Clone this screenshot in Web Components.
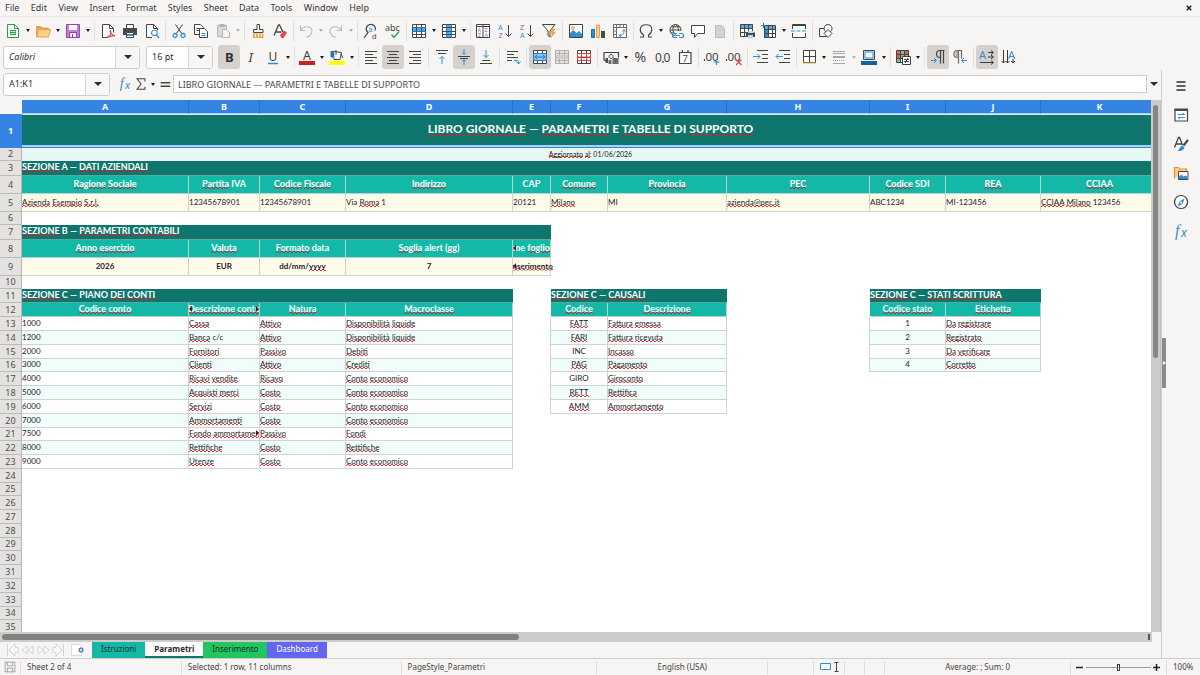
<!DOCTYPE html>
<html lang="en">
<head>
<meta charset="utf-8">
<title>Libro giornale - Calc</title>
<style>
  html, body { margin: 0; height: 100%; }
  body {
    --bg: #f6f5f4; --ink: #3d3d3d; --line: #dedcda; --blue: #3584e4;
    background: var(--bg); color: var(--ink);
    font: 9px/12px "Noto Sans", "Open Sans", sans-serif;
    overflow: hidden;
  }
</style>
</head>
<body>
<calc-app></calc-app>

<script>
const K = '#45443f', B = '#2f8fd3', G = '#b9b7b5';
const s = (d, c = K, w = 1, f = 'none') => `<path d="${d}" stroke="${c}" stroke-width="${w}" fill="${f}"/>`;
const f = (d, c) => `<path d="${d}" fill="${c}"/>`;
const t = (x, y, txt, c = K, size = 9, extra = '') => `<text x="${x}" y="${y}" fill="${c}" font-size="${size}" font-family="Noto Sans, sans-serif" ${extra}>${txt}</text>`;
const l = (x, y, txt, c, size) => `<text x="${x}" y="${y}" fill="${c}" font-size="${size}" font-family="Liberation Sans, sans-serif">${txt}</text>`;
const gridLines = (c) => s('M1.5 1.5h13v13h-13zM1.5 4.5h13M1.5 8.5h13M1.5 11.5h13M5.5 1.5v13M10.5 1.5v13', c);
const ICONS = {
  new: f('M2.5 1.5h7l4 4v9h-11z', '#fff') + s('M2.5 1.5h7l4 4v9h-11zM9.5 1.5v4h4', '#2d9f48') + f('M5 7h6v5H5z', '#2d9f48') + s('M5.5 8.5h5M5.5 10.5h5', '#bfe6c8', 1),
  open: f('M1 3.5h5l1 1.5h7v2h-10L1.5 14z', '#e8a552') + f('M4 6.5h11.5L13.5 14H1.5z', '#fbd08c') + s('M4 6.5h11.5L13.5 14H1.5zM1.5 13.5v-10h4l1 1.5h7v1.5', '#e8a14b'),
  save: f('M1.5 1.5h13v13h-13z', '#c77fd6') + s('M1.5 1.5h13v13h-13z', '#9b45ad') + f('M4 2h8v5H4z', '#fff') + f('M4.5 9.5h7v5h-7z', '#fff') + s('M4.5 9.5h7v5h-7zM7.5 11v3', '#8e3aa0'),
  pdf: f('M2.5 1.5h7l4 4v9h-11z', '#fff') + s('M8 14.5H2.500v-13h7l4 4v4M9.5 1.5v4h4') + s('M7 14.500c4-2 4.500-5 3.500-7-1 0 0 4 4.500 5.500-3-.5-6 .5-8 1.500z', '#e0454c', 1.2),
  print: f('M4 1.5h8v4H4z', '#fff') + s('M4.5 5V1.5h7V5') + f('M1 5h14v7H1z', '#4a4a48') + f('M4 9h8v5.5H4z', '#fff') + s('M4.5 9.5h7v5h-7z') + f('M5 11h6v2H5z', B),
  preview: f('M2.5 1.5h7l4 4v9h-11z', '#fff') + s('M8 14.5H2.5v-13h7l4 4v2M9.5 1.5v4h4') + s('M10.300 7a2.800 2.800 0 1 0 .1 0zM12.500 12l2.5 3', B, 1.2),
  cut: s('M4.5 1.5L11 11M11.5 1.5L5 11') + s('M4 10.5a2 2 0 1 0 .1 0zM12 10.5a2 2 0 1 0 .1 0z', B, 1.3),
  copy: f('M1.5 1.5h6l3 3v7h-9z', '#fff') + s('M1.5 1.5h6l3 3v7h-9zM3.5 5.5h3M3.5 7.5h3') + f('M6.5 5.5h5l3 3v6h-8z', '#fff') + s('M8.5 10.5h4M8.5 12.5h4', B) + s('M6.5 5.5h5l3 3v6h-8z'),
  paste: f('M2 2.5h9.5v12H2z', '#d9d8d6') + s('M2.5 2.5h9v11h-9z', G) + f('M4.5 1h5v3h-5z', '#b3b1af') + f('M7.5 6.5h4l3 3v5h-7z', '#f5f4f2') + s('M7.5 6.5h4l3 3v5h-7z', G),
  brush: s('M7 1.5h2.5v5h3.5v3H3.5v-3H7z') + f('M3 10.5h10.5v4.5H3z', '#f0a64b') + s('M5.5 11v3M8.5 11v3M11.5 11v3', '#fff'),
  clear: s('M2 12.5L6.5 2h1L11 9M3.5 9h6', K, 1.3) + f('M8 12.5l4-5 3 2-3.5 5.5H9.5z', '#e0454c'),
  undo: s('M2.5 2.5v5h5M3 7c3-5 11-4 11 1 0 3-2 5-5.5 6.5', '#bcbab8', 1.1),
  redo: s('M13.5 2.5v5h-5M13 7C10 2 2 3 2 8c0 3 2 5 5.5 6.5', '#bcbab8', 1.1),
  find: s('M7 1.500a4.500 4.500 0 0 0-2 8L1 15M7 1.500c4-.5 6.500 3 5 6', K, 1.2) + l(5.5, 8.5, 'a', B, 7) + l(9, 15.5, 'd', K, 8),
  spell: t(0, 7.5, 'abc', K, 9) + s('M6.5 11.5l2.5 3 5-6', '#2fa35c', 1.4),
  row: f('M1 1h14v14H1z', '#fff') + f('M1 4h14v5H1z', '#5ba9e2') + gridLines(K) + s('M1 4.5h14M1 8.5h14', '#1f78c0'),
  col: f('M1 1h14v14H1z', '#fff') + f('M5 1h6v14H5z', '#5ba9e2') + gridLines(K) + s('M5.5 1v14M10.5 1v14', '#1f78c0'),
  sort: f('M1 1h14v14H1z', '#fff') + s('M1.5 1.5h13v13h-13zM1.5 3.5h13M8 2v13') + l(2.5, 8.5, 'A', B, 5) + l(3, 14, 'Z', '#a748bd', 5) + l(9.5, 8.5, 'Z', '#a748bd', 5) + l(9.5, 14, 'A', B, 5),
  asc: l(1, 7, 'A', B, 7) + l(1.5, 15, 'Z', '#a748bd', 7) + s('M11.5 2v11.5M8.5 10.5l3 3 3-3'),
  desc: l(1, 7, 'Z', '#a748bd', 7) + l(1, 15, 'A', B, 7) + s('M11.5 2v11.5M8.5 10.5l3 3 3-3'),
  filter: s('M1.5 1.5h12.5l-5 6.5v6l-2-1.5V8z') + f('M11 5.5h3.5L12.5 9H15l-5.5 6.5 1.5-5H8.5z', '#f0a64b'),
  image: f('M1.5 1.5h13v13h-13z', '#fff') + f('M2 13.5V10l3.5-3 3 3L11 8l3 3v3.5H2z', B) + s('M1.5 1.5h13v13h-13z') + s('M5 3.5a1.5 1.5 0 1 0 .1 0z', '#f0a64b', 1, '#fbd08c'),
  chart: f('M1.5 6.5h3v8h-3z', '#2f8fd3') + s('M1.5 6.5h3v8h-3z', '#1b6dad') + f('M6.5 2h3v12.5h-3z', '#fbd08c') + s('M6.5 2h3v12.5h-3z', '#e8a14b') + f('M11 8h4v7h-4z', '#4a4a48'),
  pivot: f('M1.5 1.5h13v13h-13z', '#fff') + s('M1.5 1.5h13v13h-13zM1.5 4.5h13M4.5 1.5v13M8 1.5v3M11.5 1.5v3M1.5 8h3M1.5 11.5h3', '#6a6a68') + s('M7 12.5c4 0 5-1.5 5-5.5M10.5 8.5L12 6.5l1.5 2M9 11l-2 1.5L9 14', B),
  omega: s('M2 14h3.5v-2C3 10.5 2.2 9 2.2 6.5 2.2 3.5 4.8 1.8 8 1.8s5.8 1.7 5.8 4.7c0 2.5-.8 4-3.3 5.5v2H14', K, 1.1),
  link: s('M7.5 1.5a5.5 5.5 0 1 0 0 11M7.5 1.5a5.5 5.5 0 0 1 5.5 6M2 7h11M3 3.8h9M3 10h3M7.5 1.5c-3.500 3-3.500 7 0 10M7.5 1.5c2 1.5 3 3 3 6') + s('M9 10.5H6.5a2 2 0 0 0 0 4H9M11 10.5h2.5a2 2 0 0 1 0 4H11M8 12.5h4', B, 1.2),
  comment: f('M1.5 2.5h13v8h-7l-3 4v-4h-3z', '#fff') + s('M1.5 2.5h13v8h-7l-3 4v-4h-3z'),
  headfoot: f('M3 2h6.5l3.5 3.5V15H3z', '#d3d2d0') + s('M3.5 2.5h6l3 3v9h-9z', '#bebcba'),
  printarea: f('M1 1h13v13H1z', '#fff') + f('M1 1h13v4H1z', '#5ba9e2') + s('M1.5 1.5h12v12h-12zM1.5 5.5h12M1.5 9.5h12M5.5 1.5v12M9.5 1.5v12') + f('M7 9.5h9V14H7z', '#4a4a48') + f('M9 8h5v2H9zM9 12h5v3.5H9z', '#b8dcf4'),
  freeze: f('M3 3h12v12H3z', '#fff') + f('M3 3h4v12H3z', '#2f8fd3') + f('M3 3h12v3H3z', '#5ba9e2') + s('M3.5 2.5h11v12h-11zM3.5 6.5h11M3.5 10.5h11M7.5 2.5v12M11.5 2.5v12') + s('M2.5 0v5M0 2.5h5', '#1f78c0'),
  split: f('M1.5 1.5h13v13h-13z', '#fff') + s('M1.5 6V1.5h13V6M1.5 10v4.5h13V10M1.5 2.5h13') + s('M0 8h16', B).replace('/>', ' stroke-dasharray="4 1.5"/>'),
  shapes: s('M1.5 5.5h7v8h-7z') + s('M10 1.5a4 4 0 1 0 .1 0z', K, 1, '#f6f5f4') + s('M10 6.5l4 4-4 4-4-4z', K, 1, '#f6f5f4'),
  bold: t(4, 12.8, 'B', '#2e2e2e', 13, 'font-weight="700"'),
  italic: `<text x="5.5" y="12.5" fill="#3a3a3a" font-size="13" font-family="Noto Sans" font-style="italic">I</text>`,
  under: t(3.5, 11.5, 'U', K, 12) + s('M3 14.5h10', B, 1.5),
  fcolor: t(4, 10.5, 'A', '#3a3a3a', 12.5) + f('M0 12h16v4H0z', '#c9211e'),
  hcolor: s('M4.5 2.5l8 1-1.5 7H5z', K, 1, '#fff') + s('M7 1v5M12 5l2 4', K) + f('M1.5 2h3v6c-1 1-2 1-3 0z', '#1f78c0') + f('M0 12h16v4H0z', '#ffff00'),
  left: s('M2 2.5h12M2 5.5h8M2 8.5h12M2 11.5h8M2 14.5h12'),
  center: s('M2 2.5h12M4 5.5h8M2 8.5h12M4 11.5h8M2 14.5h12'),
  right: s('M2 2.5h12M6 5.5h8M2 8.5h12M6 11.5h8M2 14.5h12'),
  top: s('M2 1.5h12M4 4.5h8') + s('M8 15V7.5M5.5 10L8 7.5l2.5 2.5', B),
  middle: s('M2 7.5h12M4 9.5h8') + s('M8 0v5M6 3.5l2 2 2-2M8 16v-5M6 12.5l2-2 2 2', B),
  bottom: s('M4 11.5h8M2 14.5h12') + s('M8 1v7.5M5.5 6L8 8.5 10.5 6', B),
  wrap: s('M2 2.5h11M2 5.5h7M2 8.5h11M2 11.5h5') + s('M9 11.5h3.500c1 0 1 1 1 3.5M11 12.5l2.5 2.5 2-2.5', B),
  merge: f('M1 1h14v14H1z', '#fff') + gridLines(K) + f('M2 5h12v6H2z', '#8cc6ee') + s('M1.5 4.5h13v7h-13zM3 8h10M5 6L3 8l2 2M11 6l2 2-2 2', '#1f78c0'),
  mergec: f('M1 1h14v14H1z', '#e6e5e3') + gridLines('#b1afad') + f('M2 6h12v4H2z', '#cfcdcb'),
  unmerge: f('M1 1h14v14H1z', '#fff') + gridLines(K) + s('M1.5 4.5h13v7h-13zM5.5 4.5v7M10.5 4.5v7M1.5 8h13', '#e0454c'),
  currency: s('M1 11.500v-8h14.500v5M1 11.500h3', K, 1.2) + s('M8 5.5a2 2 0 1 0 .1 0z', K) + f('M9.500 9h6v6h-6zM5.500 11h3v4h-3z', '#6b6b69') + f('M2.500 9h2.500v5H2.500z', '#4a4a48'),
  percent: t(1.5, 13, '%', K, 14),
  decimal: t(0, 13, '0', K, 12) + t(8.5, 13, '0', K, 12) + s('M8 12v2', K, 1.2),
  date: f('M2 3h12v12H2z', '#fff') + s('M2.5 3.5h11.5v11h-11.5zM5.5 1v3M11 1v3', K, 1.2) + t(5.5, 13, '7', K, 9.5),
  adddec: s('M.5 10v2', K, 1.2) + t(1.5, 12, '00', K, 11.5) + s('M12.5 10v6M9.5 13h6', B, 1.2),
  deldec: s('M.5 10v2', K, 1.2) + t(1.5, 12, '00', K, 11.5) + s('M10 10.5l5.5 5.5M15.5 10.5L10 16', '#e0454c', 1.2),
  indent: s('M4 1.5h11M9 5.5h6M9 9.5h6M4 13.5h11') + s('M0 7.5h7M4.5 5L7 7.5 4.5 10', B),
  outdent: s('M4 1.5h11M9 5.5h6M9 9.5h6M4 13.5h11') + s('M8 7.5H1M3.5 5L1 7.5 3.5 10', B),
  border: f('M2 2h12v12H2z', '#fff') + s('M2.5 1.5h12v12h-12zM8.5 1.5v12M2.5 7.5h12') + s('M2 14h13', '#f0a64b'),
  lstyle: s('M2 2.5h12M2 4.5h12', '#aaa8a6', 1) + s('M2 8h12', '#aaa8a6', 2) + s('M2 11.5h12', '#aaa8a6').replace('/>', ' stroke-dasharray="1 1"/>') + s('M2 14.5h12', '#aaa8a6'),
  bcolor: s('M2.5 1.5h11v9h-11z', K, 1, '#dceefb') + s('M4 3h8v6H4z', '#2f8fd3', 1, '#f4f9fd') + f('M0 12h16v4H0z', '#1c5f9f'),
  cond: f('M1 1h12v12H1z', '#fff') + f('M2 2h11v3H2z', '#e0605c') + f('M6 2h4v3H6zM2 9h4v4H2z', '#7cc68b') + f('M5 5h8v4H5z', '#7cc68b') + f('M2 5h4v4H2z', '#e0605c') + s('M1.5 1.5h12v12h-12zM1.5 5.5h12M1.5 9.5h12M5.5 1.5v12M9.5 1.5v12') + f('M7 7h8.5v8.5H7z', '#fff') + s('M7.5 7.5h8v8h-8zM9 10.5h5M9 12.5h5M13 9l-3 5'),
  ltr: s('M14.500 1.5H9M10.500 1.5v13M13.500 1.5v13', K, 1.2) + s('M10 1.5a3.5 3.5 0 0 0 0 7', K, 1.2) + s('M1 11.5h5M4 9l2.5 2.5L4 14', B),
  rtl: f('M7 1.5a3.5 3.5 0 1 0 0 7z', '#aaa') + s('M10 1.5H5.5a3.5 3.5 0 0 0 0 7M6.5 1.5v13M9.5 1.5v8', '#6a6a68', 1.2) + s('M15 11.5h-5M12 9l-2.5 2.5L12 14', B),
  tdh: t(0, 10, 'A', B, 11) + s('M9 3.5h5M9 8h5M1 13.5h13M12 1.5l2.5 2-2.5 2M12 6l2.5 2L12 10M12 11.5l2.5 2-2.5 2', '#3a3a3a'),
  tdv: t(7, 10, 'A', B, 11) + s('M2.5 1v13M6.5 1v13M12 10v4M.5 12l2 2 2-2M4.5 12l2 2 2-2M10 12l2 2 2-2', '#3a3a3a'),
  fx: `<text x="2" y="12.5" fill="${B}" font-size="16" font-family="Liberation Serif" font-style="italic">f</text>` + `<text x="8" y="14" fill="${B}" font-size="12" font-family="Noto Sans" font-style="italic">x</text>`,
  sigma: s('M12.5 5V2H3.5l4.5 6-4.5 6h9v-3', K, 1.2),
  equal: s('M3 6.5h11M3 10.5h11', K, 1.8),
  menu: s('M3.5 4h9M3.5 8h9M3.5 12h9', '#2e2e2e', 1.5),
  props: f('M2 2h13v12H2z', '#fff') + s('M2 2.5h12.5v11.5H2z', K, 1.2) + f('M1.5 1.5h13.5v2.5H1.5z', '#4a4a48') + s('M4.5 7.5h7M9.5 6l2 1.5M5 10.5h7M7 12L5 10.5', B),
  styles: s('M1.5 11.5L5.5 1.5h1l3 7.5M3 8h5.5', K, 1.3) + s('M15 4L10.500 9.500', K, 2) + f('M9.5 9.5l2 2c-1 3-4 4-7 3.5 2-1 2-4.5 5-5.5z', B),
  gallery: s('M1.5 13.5v-11h4l1 1.5h7v2', '#e8903a', 1.2, '#fbd08c') + f('M5.5 6.5h10v8.5h-10z', '#fff') + s('M5.5 6.5h9.5v8H5.5z') + f('M6 14v-2.5l2.5-2 2 2 2-1 2 1V14z', '#2f8fd3'),
  nav: s('M8 1.5a6.5 6.5 0 1 0 .1 0z', K, 1.2, '#fff') + f('M11.5 4.5L9.5 10l-5 2.5L7 7z', '#2f8fd3') + f('M8 7.5a1 1 0 1 0 .1 0z', '#fff'),
  disk: s('M1.5 1.5h13v13h-13zM4.5 1.5v5h7v-5M4.5 14.5v-5h7v5', '#8b8987'),
  close: s('M5 5l6 6M11 5l-6 6', '#1e1e1e', 2),
};
const svg = (name, size = 16) => `<svg viewBox="0 0 16 16" width="${size}" height="${size}" aria-hidden="true">${ICONS[name]}</svg>`;

const RESET = `
  *, ::before, ::after { box-sizing: border-box; }
  button { margin: 0; padding: 0; border: 0; background: none; color: inherit; font: inherit; }
  input { margin: 0; font: inherit; color: inherit; outline: 0; }
  svg { display: block; overflow: visible; }
`;
class Base extends HTMLElement {
  connectedCallback() {
    if (this.shadowRoot) return;
    this.attachShadow({ mode: 'open' }).innerHTML = `<style>${RESET}${this.css()}</style>${this.html()}`;
  }
  css() { return ''; }
  html() { return '<slot></slot>'; }
}

/* Icon button, optionally with a drop-down arrow beside it */
customElements.define('tool-button', class extends Base {
  css() { return `
    :host { display: flex; flex: none; height: 24px; align-items: stretch; }
    .main { width: 22px; display: grid; place-items: center; border-radius: 3px; }
    :host([active]) .main { background: #d5d2ce; }
    :host([narrow]) .main { width: 16px; }
    .more { width: 8px; display: grid; place-items: center; }
    .more::before { content: ""; border: 2px solid transparent; border-top: 3px solid #1e1e1e; border-bottom: 0; }
    :host([disabled]) .more::before { border-top-color: #b5b3b1; }
  `; }
  html() {
    const label = this.getAttribute('label'), off = this.hasAttribute('disabled') ? 'disabled' : '';
    const size = this.hasAttribute('narrow') ? 14 : 16;
    return `<button class="main" aria-label="${label}" ${off}>${svg(this.getAttribute('icon'), size)}</button>` +
      (this.hasAttribute('split') ? `<button class="more" aria-label="${label} options" ${off}></button>` : '');
  }
});

customElements.define('tool-sep', class extends Base {
  css() { return `
    :host { display: flex; flex: none; width: 5px; height: 20px; justify-content: center; }
    :host([thin]) { width: 4px; }
    i { width: 1px; background: #e2e0de; }
  `; }
  html() { return '<i></i>'; }
});

customElements.define('combo-box', class extends Base {
  css() { return `
    :host { display: flex; flex: none; height: 23px; border: 1px solid #cfccc9; border-radius: 3px; background: #fff; overflow: hidden; }
    input { flex: 1; min-width: 0; border: 0; padding: 0 5px; background: none; color: #2e2e2e; }
    :host([italic]) input { font-style: italic; }
    button { width: 24px; background: #f8f7f6; border-left: 1px solid #d9d6d3; display: grid; place-items: center; }
    button::before { content: ""; border: 4px solid transparent; border-top: 4px solid #2e2e2e; border-bottom: 0; }
  `; }
  html() {
    const l = this.getAttribute('label');
    return `<input type="text" aria-label="${l}" value="${this.getAttribute('value')}"><button aria-label="${l} list"></button>`;
  }
});

customElements.define('menu-bar', class extends Base {
  css() { return `
    :host { display: flex; flex: none; height: 17px; padding: 0 3px 0 0; align-items: center; justify-content: space-between; border-bottom: 1px solid #ebe9e7; color: #363636; }
    nav { display: flex; width: 374px; justify-content: space-between; }
    nav button { padding: 0 5px; line-height: 16px; }
    .x { width: 16px; display: grid; place-items: center; }
  `; }
  html() {
    return `<nav>${['File','Edit','View','Insert','Format','Styles','Sheet','Data','Tools','Window','Help']
      .map(m => `<button>${m}</button>`).join('')}</nav><button class="x" aria-label="Close">${svg('close', 12)}</button>`;
  }
});

/* Toolbars are listed as text: "icon" plain, "icon+" split, "icon*" active, "icon!" disabled, "|" separator, ":" thin separator */
const bar = spec => spec.split(' ').map(k => {
  if (k === '|') return '<tool-sep></tool-sep>';
  if (k === ':') return '<tool-sep thin></tool-sep>';
  const n = k.replace(/[^a-z]/g, '');
  return `<tool-button icon="${n}" label="${n}"${k.includes('+') ? ' split' : ''}${k.includes('*') ? ' active' : ''}${k.includes('!') ? ' disabled' : ''}></tool-button>`;
}).join('');

customElements.define('standard-bar', class extends Base {
  css() { return ':host { display: flex; flex: none; height: 27px; padding-left: 2px; align-items: center; }'; }
  html() { return bar('new+ open+ save+ | pdf print preview | cut copy paste+! | brush clear : undo+! redo+! | find spell : row+ col+ : sort asc desc filter | image chart pivot : omega+ link comment headfoot! | printarea freeze+ split | shapes'); }
});

customElements.define('format-bar', class extends Base {
  css() { return `
    :host { display: flex; flex: none; height: 26px; padding-left: 3px; align-items: center; }
    .font { width: 137px; margin-right: 6px; }
    .size { width: 67px; margin-right: 5px; }
  `; }
  html() {
    return `<combo-box class="font" italic label="Font name" value="Calibri"></combo-box><combo-box class="size" label="Font size" value="16 pt"></combo-box>` +
      bar('bold* italic under+ : fcolor+ hcolor+ : left center* right | top middle* bottom | wrap | merge* mergec! unmerge | currency+ percent decimal date | adddec deldec | indent outdent : border+ lstyle+! bcolor+ : cond+ | ltr* rtl | tdh* tdv');
  }
});

customElements.define('formula-bar', class extends Base {
  css() { return `
    :host { display: flex; flex: none; height: 30px; padding: 0 0 2px 3px; align-items: center; }
    .name { width: 107px; margin-right: 7px; }
    .f { flex: 1; min-width: 0; height: 18px; border: 1px solid #cfccc9; background: #fff; padding: 0 4px; color: #4a4a4a; }
    .drop { width: 14px; height: 18px; display: grid; place-items: center; }
    .drop::before { content: ""; border: 4px solid transparent; border-top: 4px solid #2e2e2e; border-bottom: 0; }
  `; }
  html() {
    return `<combo-box class="name" label="Name box" value="A1:K1"></combo-box>
      <tool-button narrow icon="fx" label="Function wizard"></tool-button>
      <tool-button narrow split icon="sigma" label="Sum"></tool-button>
      <tool-button narrow icon="equal" label="Formula"></tool-button>
      <input class="f" aria-label="Formula" value="LIBRO GIORNALE — PARAMETRI E TABELLE DI SUPPORTO">
      <button class="drop" aria-label="Expand formula bar"></button>`;
  }
});

/* Sheet model. A cell is [span, class, text]; words between ~ are flagged by the spell checker. */
const SEC = (n, x) => [n, 'sec', x], H = x => [1, 'hd', x], C = x => [1, 'in', x], E = n => [n, '', ''];
const conti = [
  ['1000','~Cassa~','~Attivo~','~Disponibilità~ ~liquide~'], ['1200','~Banca~ c/c','~Attivo~','~Disponibilità~ ~liquide~'],
  ['2000','~Fornitori~','~Passivo~','~Debiti~'], ['3000','~Clienti~','~Attivo~','~Crediti~'],
  ['4000','~Ricavi~ ~vendite~','~Ricavo~','~Conto~ ~economico~'], ['5000','~Acquisti~ ~merci~','~Costo~','~Conto~ ~economico~'],
  ['6000','~Servizi~','~Costo~','~Conto~ ~economico~'], ['7000','~Ammortamenti~','~Costo~','~Conto~ ~economico~'],
  ['7500','~Fondo~ ~ammortamento~','~Passivo~','~Fondi~'], ['8000','~Rettifiche~','~Costo~','~Rettifiche~'],
  ['9000','~Utenze~','~Costo~','~Conto~ ~economico~']];
const causali = [['~FATT~','~Fattura~ ~emessa~'],['~FARI~','~Fattura~ ~ricevuta~'],['INC','~Incasso~'],['~PAG~','~Pagamento~'],['GIRO','~Giroconto~'],['~RETT~','~Rettifica~'],['~AMM~','~Ammortamento~']];
const stati = [['1','~Da~ ~registrare~'],['2','~Registrato~'],['3','~Da~ ~verificare~'],['4','~Corretto~']];
const ROWS = [
  [34, [[11, 'title', '~LIBRO~ ~GIORNALE~ — ~PARAMETRI~ E ~TABELLE~ DI ~SUPPORTO~']]],
  [13, [[11, 'date', '~Aggiornato~ ~al~: 01/06/2026']]],
  [15, [SEC(11, '~SEZIONE~ A — ~DATI~ ~AZIENDALI~')]],
  [18, ['~Ragione~ ~Sociale~','~Partita~ IVA','~Codice~ ~Fiscale~','~Indirizzo~','CAP','~Comune~','~Provincia~','~PEC~','~Codice~ SDI','~REA~','~CCIAA~'].map(x => x === 'CAP' ? [1, 'hd cap', x] : H(x))],
  [18, ['~Azienda~ ~Esempio~ ~S.r.l.~','12345678901','12345678901','Via ~Roma~ 1','20121','~Milano~','MI','~azienda@pec.it~','ABC1234','MI-123456','~CCIAA~ ~Milano~ 123456'].map(C)],
  [12, [E(11)]],
  [15, [SEC(5, '~SEZIONE~ B — ~PARAMETRI~ ~CONTABILI~'), E(6)]],
  [18, [H('~Anno~ ~esercizio~'), H('~Valuta~'), H('~Formato~ data'), H('~Soglia~ alert (~gg~)'), [1, 'hd cutl end', 'Nome ~foglio~'], E(6)]],
  [18, [...['2026','EUR','dd/mm/~yyyy~','7'].map(x => [1, 'in mid', x]), [1, 'in mid cutl spill', '~Inserimento~'], E(6)]],
  [13, [E(11)]],
  [14, [SEC(4, '~SEZIONE~ C — PIANO ~DEI~ ~CONTI~'), E(1), SEC(2, '~SEZIONE~ C — ~CAUSALI~'), E(1), SEC(2, '~SEZIONE~ C — ~STATI~ ~SCRITTURA~'), E(1)]],
  [14, [H('~Codice~ ~conto~'), [1, 'hd cutl cutr', '~Descrizione~ ~conto~'], H('~Natura~'), H('~Macroclasse~'), E(1), H('~Codice~'), H('~Descrizione~'), E(1), H('~Codice~ ~stato~'), H('~Etichetta~'), E(1)]],
];
const HEIGHTS = [14,14,14,13,14,14,14,14,13,14,14,14,13,14,14,14,13,14,14,14,14,13,14];
HEIGHTS.forEach((h, i) => {
  const z = i % 2 ? 'w alt' : 'w', cells = [];
  const gap = next => [1, next ? 'edge' : '', ''];
  if (conti[i]) {
    conti[i].forEach((x, j) => cells.push([1, z + (i === 8 && j === 1 ? ' cutr' : ''), x]));
    cells.push(gap(causali[i]));
    causali[i] ? cells.push([1, z + ' mid', causali[i][0]], [1, z, causali[i][1]]) : cells.push(E(2));
    cells.push(gap(stati[i]));
    stati[i] ? cells.push([1, z + ' mid', stati[i][0]], [1, z, stati[i][1]]) : cells.push(E(2));
    cells.push(E(1));
  } else cells.push(E(11));
  ROWS.push([h, cells]);
});

customElements.define('sheet-grid', class extends Base {
  css() { return `
    :host { display: flex; flex: 1; min-height: 0; overflow: hidden; background: #fff; }
    .view { flex: 1; min-width: 0; overflow: hidden; }
    table { width: calc(100% + 8px); table-layout: fixed; border-collapse: separate; border-spacing: 0; font: 8px/10px Lato, "Open Sans", sans-serif; color: #1c1c1c; }
    th, td { padding: 0; white-space: nowrap; overflow: hidden; vertical-align: middle; font-weight: 400; }
    th { font: 9px/12px "Noto Sans", sans-serif; }
    thead th { height: 14px; background: var(--blue); color: #fff; font-weight: 700; border-right: 1px solid #2c72c9; border-bottom: 1px solid #a9cdf3; }
    thead th:first-child { background: var(--bg); border-color: var(--bg); }
    tbody th { background: #e4e2e0; color: #4c4c4c; border-right: 1px solid #b9b7b5; border-bottom: 1px solid #bdbbb9; }
    tbody tr:first-child th { background: var(--blue); color: #fff; font-weight: 700; border-color: var(--blue); }
    td { text-align: left; position: relative; padding-bottom: 2px; }
    td .v { display: block; }
    .title { background: #0f766e; color: #fff; font-size: 12px; line-height: 16px; font-weight: 700; text-align: center; border-top: 1px solid #d9f0ee; border-bottom: 1px solid var(--blue); box-shadow: inset 0 -2px #a5d5ee; padding-bottom: 4px; }
    .date { background: #e6f7f4; text-align: center; font-size: 7px; }
    .sec { background: #0f766e; color: #fff; font-size: 9px; font-weight: 700; border-bottom: 1px solid #5aa79f; }
    .hd { background: #14b8a6; color: #fff; font-size: 9px; font-weight: 700; text-align: center; border-right: 1px solid #a9d5d0; border-bottom: 1px solid #b5d6d2; }
    .in { background: #fffbeb; border-right: 1px solid #d5d3cb; border-bottom: 1px solid #d0d0cc; }
    .w { border-right: 1px solid #d0d3d6; border-bottom: 1px solid #d0d3d6; }
    .alt { background: #f0fdfa; }
    .mid { text-align: center; }
    .in.mid { font-weight: 700; }
    .edge { border-right: 1px solid #d0d3d6; }
    .cutl .v { display: flex; justify-content: center; }
    .end .v { justify-content: flex-end; }
    .spill { overflow: visible; }
    .spill .v { clip-path: inset(0 -3px 0 0); }
    .cutl::before, .cutr::after { content: ""; position: absolute; top: 50%; margin-top: -4px; border: 3px solid transparent; }
    .cutl::before { left: 0; border-left: 0; border-right-color: #6b0f14; z-index: 1; }
    .cutr::after { right: 0; border-right: 0; border-left-color: #6b0f14; }
    .sp { background: url("data:image/svg+xml,%3Csvg xmlns='http://www.w3.org/2000/svg' width='4' height='2'%3E%3Cpath d='M0 2L2 0L4 2' fill='none' stroke='%23e01b24' stroke-width='.9'/%3E%3C/svg%3E") left bottom / 4px 2px repeat-x; }
    .bar { flex: none; width: 10px; background: #cdcccb; padding: 5px 2px 0 2px; border-right: 1px solid #c4c2c0; }
    .bar i { display: block; height: 48%; border-radius: 3px; background: #858685; }
  `; }
  html() {
    const cols = [22,167,71,86,167,38,57,119,143,76,95,0];
    const mark = x => x.split('~').map((p, i) => i % 2 ? `<span class="sp">${p}</span>` : p.replace(/^ | $/g, '&nbsp;')).join('');
    return `<div class="view"><table>
      <colgroup>${cols.map(w => w ? `<col style="width:${w}px">` : '<col>').join('')}</colgroup>
      <thead><tr><th></th>${[...'ABCDEFGHIJK'].map(c => `<th scope="col">${c}</th>`).join('')}</tr></thead>
      <tbody>${ROWS.map(([h, cells], i) => `<tr style="height:${h}px"><th scope="row">${i + 1}</th>${cells.map(([n, c, x]) =>
        `<td${n > 1 ? ` colspan="${n}"` : ''}${c ? ` class="${c}"` : ''}>${x ? `<span class="v">${mark(x)}</span>` : ''}</td>`).join('')}</tr>`).join('')}</tbody>
    </table></div><div class="bar" role="scrollbar" aria-orientation="vertical" aria-valuenow="0"><i></i></div>`;
  }
});

customElements.define('sheet-tabs', class extends Base {
  css() { return `
    :host { display: block; flex: none; }
    .scroll { height: 10px; margin-right: 9px; background: #cdcccb; padding: 2px 2px; display: flex; justify-content: space-between; }
    .scroll i { width: 45%; height: 6px; border-radius: 3px; background: #808280; }
    .scroll b { width: 2px; height: 6px; background: #555; }
    .tabs { display: flex; height: 16px; padding-left: 5px; font-size: 8px; }
    .nav { width: 15px; display: grid; place-items: center; }
    .add { width: 23px; margin-right: 4px; display: grid; place-items: center; }
    .tab { padding: 0 9px; line-height: 14px; padding-bottom: 2px; color: #0e2f2c; }
    .on { background: #fff; font-weight: 700; color: #2a2a2a; border-bottom: 2px solid #0f766e; padding-bottom: 0; }
  `; }
  html() {
    const n = d => `<svg width="14" height="14" viewBox="0 0 14 14"><path d="${d}" fill="#fbfbfa" stroke="#cbc9c7" stroke-width=".8"/></svg>`;
    const navs = [['First sheet','M1.500 1v12M3 7l6-6v3.500h3v5H9V13z'],['Previous sheet','M1 7l5-4v8zM7 7l5-4v8z'],['Next sheet','M7 7L2 3v8zM13 7L8 3v8z'],['Last sheet','M12.500 1v12M11 7L5 1v3.500H2v5h3V13z']];
    return `<div class="scroll" role="scrollbar" aria-valuenow="0"><i></i><b></b></div>
      <div class="tabs">${navs.map(([l, d]) => `<button class="nav" aria-label="${l}">${n(d)}</button>`).join('')}
      <button class="add" aria-label="Add sheet"><svg width="14" height="14" viewBox="0 0 14 14"><path d="M1.500 1.500h8l2 2v9h-10z" fill="#fff" stroke="#dddbd9"/><circle cx="11" cy="7" r="2.500" fill="#3c66b0"/><path d="M11 5.500v3M9.500 7h3" stroke="#fff"/></svg></button>
      <button class="tab" style="background:#14b8a6">Istruzioni</button><button class="tab on">Parametri</button><button class="tab" style="background:#22c55e">Inserimento</button><button class="tab" style="background:#6366f1;color:#fff">Dashboard</button></div>`;
  }
});

customElements.define('side-deck', class extends Base {
  css() { return `
    :host { display: flex; flex: none; width: 39px; padding-top: 1px; flex-direction: column; align-items: center; border-left: 1px solid #cfccc9; position: relative; }
    button { width: 28px; height: 29px; display: grid; place-items: center; }
    .grip { position: absolute; left: 0; top: 268px; width: 4px; height: 50px; background: #8b8d8b; }
    .grip::after { content: ""; border: 2px solid transparent; border-left: 3px solid #fff; border-right: 0; }
  `; }
  html() {
    return ['menu','props','styles','gallery','nav','fx'].map(i => `<button aria-label="${i}">${svg(i)}</button>`).join('') + '<button class="grip" aria-label="Hide sidebar"></button>';
  }
});

customElements.define('status-bar', class extends Base {
  css() { return `
    :host { display: grid; flex: none; height: 17px; border-top: 1px solid #cfcdcb; font-size: 8px; color: #454545; align-items: center;
      grid-template-columns: 21px 161fr 220fr 196fr 171fr 46px 31px 20px 20px 186fr 96px 33px; }
    span { height: 13px; line-height: 12px; padding-left: 6px; border-right: 1px solid #e0dedc; white-space: nowrap; }
    span:last-child { border: 0; }
    .c { text-align: center; padding: 0; }
    .i { display: grid; place-items: center; padding: 0; }
    .z { display: flex; align-items: center; padding: 0 3px; }
    .z button { width: 12px; height: 13px; display: grid; place-items: center; }
    input { appearance: none; flex: 1; min-width: 0; height: 9px; background: linear-gradient(#9a9a98, #9a9a98) center / 100% 1px no-repeat; }
    input::-webkit-slider-thumb { appearance: none; width: 3px; height: 7px; border: 1px solid #3d3d3d; background: #f6f5f4; }
  `; }
  html() {
    return `<span class="i">${svg('disk', 12)}</span><span>Sheet 2 of 4</span><span>Selected: 1 row, 11 columns</span><span>PageStyle_Parametri</span>
      <span class="c">English (USA)</span><span></span>
      <span class="i"><svg width="20" height="12" viewBox="0 0 20 12"><path d="M1.500 2.500h10v6h-10z" fill="#fff" stroke="#2f8fd3"/><path d="M15.500 1.500h4M17.500 1.500v9M15.500 10.500h4" stroke="#454545" fill="none"/></svg></span>
      <span></span><span></span><span class="c">Average: ; Sum: 0</span>
      <span class="z"><button aria-label="Zoom out"><svg width="7" height="7"><path d="M0 3.500h7" stroke="#222" stroke-width="1.500"/></svg></button><input type="range" aria-label="Zoom" value="50"><button aria-label="Zoom in"><svg width="7" height="7"><path d="M0 3.500h7M3.500 0v7" stroke="#222" stroke-width="1.500"/></svg></button></span><span>100%</span>`;
  }
});

customElements.define('calc-app', class extends Base {
  css() { return `
    :host { display: flex; flex-direction: column; height: 100vh; }
    .main { display: flex; flex: 1; min-height: 0; }
    .doc { display: flex; flex-direction: column; flex: 1; min-width: 0; }
  `; }
  html() {
    return `<menu-bar></menu-bar><standard-bar></standard-bar><format-bar></format-bar>
      <div class="main"><div class="doc"><formula-bar></formula-bar><sheet-grid></sheet-grid><sheet-tabs></sheet-tabs></div><side-deck></side-deck></div>
      <status-bar></status-bar>`;
  }
});
</script>
</body>
</html>
